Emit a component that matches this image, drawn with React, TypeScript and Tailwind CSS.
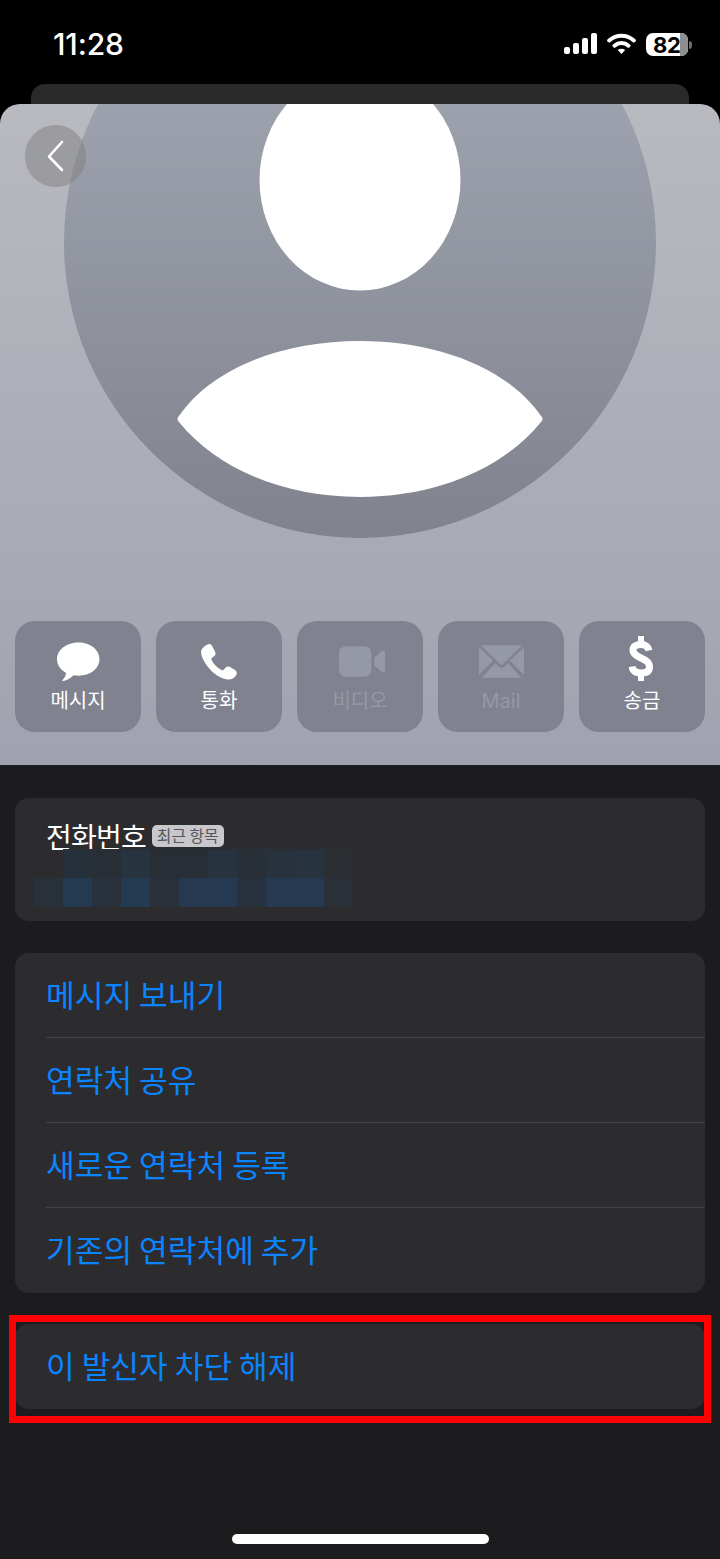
const KR = "font-['Noto_Sans_CJK_KR','Noto_Sans',sans-serif]";

const topCells = [
  "", "bg-[#26303a]", "bg-[#282e35]", "bg-[#27333f]", "bg-[#282e36]", "bg-[#282e36]", "bg-[#27333f]", "bg-[#282f37]", "bg-[#27323d]", "bg-[#27333f]", "bg-[#2b2e33]",
];
const bottomCells = [
  "bg-[#28313a]", "bg-[#243a50]", "bg-[#28313c]", "bg-[#243a50]", "bg-[#29303a]", "bg-[#253a51]", "bg-[#253a51]", "bg-[#27323e]", "bg-[#253a50]", "bg-[#253a50]", "bg-[#2a2f38]",
];

function ActionButton({ label, icon, dim }: { label: string; icon: React.ReactNode; dim?: boolean }) {
  return (
    <div className="w-[126px] h-[111px] rounded-[20px] bg-[#80828f] flex flex-col items-center">
      <div className="h-[64px] w-full flex items-center justify-center pt-[18px]">{icon}</div>
      <span className={`font-['Inter','Noto_Sans_CJK_KR',sans-serif] text-[20px] leading-[28px] mt-[2px] ${dim ? "text-[#9598a5]" : "text-white"}`}>{label}</span>
    </div>
  );
}

function ListRow({ label, last }: { label: string; last?: boolean }) {
  return (
    <div className={`h-[85px] ml-[31px] pb-[3px] flex items-center ${last ? "" : "border-b border-[#424245]"}`}>
      <span className={`${KR} text-[31.200px] text-[#0a84ff] leading-none`}>{label}</span>
    </div>
  );
}

export default function App() {
  return (
    <div className="relative w-[720px] h-[1559px] bg-black overflow-hidden flex flex-col">
      {/* status bar */}
      <div className="h-[84px] shrink-0 flex items-start justify-between pt-[25px] pl-[53px] pr-[28px]">
        <span className="font-['Inter',sans-serif] text-[30px] font-medium leading-[38px] text-white tracking-[-0.1px]">11:28</span>
        <div className="flex items-start gap-[10px] pt-[8px]">
          <svg width="33" height="21" viewBox="0 0 33 21" fill="white">
            <rect x="0" y="14" width="6" height="7" rx="2" />
            <rect x="9" y="10" width="6" height="11" rx="2" />
            <rect x="18" y="5" width="6" height="16" rx="2" />
            <rect x="27" y="0" width="6" height="21" rx="2" />
          </svg>
          <svg width="29" height="22" viewBox="0 0 29 22" fill="none" stroke="white" strokeWidth="4" strokeLinecap="round">
            <path d="M2.200 7.500C9.500 1.300 19.500 1.300 26.800 7.500" />
            <path d="M7.500 12.700C11.500 9.200 17.500 9.200 21.500 12.700" />
            <path d="M14.500 21L10.800 17C13 15.200 16 15.200 18.200 17Z" fill="white" strokeWidth="0" />
          </svg>
          <div className="relative w-[42px] h-[23px] rounded-[7px] bg-white flex items-center justify-start pl-[7px]">
            <div className="absolute right-0 top-0 bottom-0 w-[8px] rounded-r-[7px] bg-[#8e8e8e]" />
            <span className="relative font-['Inter',sans-serif] text-[22px] font-bold text-black leading-none tracking-[-0.3px]">82</span>
          </div>
          <div className="w-[3px] h-[8px] mt-[8px] rounded-r-full bg-[#6e6e6e] -ml-[9px]" />
        </div>
      </div>

      {/* sheet behind */}
      <div className="h-[20px] shrink-0 mx-[31px] rounded-t-[14px] bg-[#2a2a2a]" />

      {/* contact header */}
      <div className="relative h-[661px] shrink-0 rounded-t-[20px] overflow-hidden bg-gradient-to-b from-[#b9bac0] to-[#a0a2af] flex flex-col justify-end">
        <svg width="720" height="661" viewBox="0 0 720 661" className="absolute left-0 top-0">
          <defs>
            <linearGradient id="avatar" x1="0" y1="0" x2="0" y2="1">
              <stop offset="0" stopColor="#a7acb8" />
              <stop offset="1" stopColor="#80838e" />
            </linearGradient>
          </defs>
          <circle cx="360" cy="138" r="296" fill="url(#avatar)" />
          <ellipse cx="360" cy="76" rx="100.500" ry="110.500" fill="white" />
          <path d="M179 312C213 263 284 237 360 237C436 237 507 263 541 312C543 314 543 316 541 318C503 365 436 393 360 393C284 393 217 365 179 318C177 316 177 314 179 312Z" fill="white" />
        </svg>

        <div className="absolute left-[25px] top-[21px] w-[61px] h-[62px] rounded-full bg-[#7f7f7f]/50 flex items-center justify-center">
          <svg width="20" height="32" viewBox="0 0 20 32" fill="none" stroke="white" strokeWidth="2.6" strokeLinecap="round" strokeLinejoin="round">
            <path d="M16 2L3 16.500L16 30" />
          </svg>
        </div>

        <div className="relative flex justify-between px-[15px] pb-[33px]">
          <ActionButton
            label="메시지"
            icon={
              <svg width="43" height="40" viewBox="0 0 44 40" fill="white">
                <path d="M22 0C34 0 43.500 7.500 43.500 17C43.500 27 34 34 22 34C20 34 18.500 33.800 17 33.500C14 36 10 39 6.500 39.500C5.500 39.600 5.200 38.800 5.800 38.200C7.500 36.500 9 34 9.300 31.200C3.500 28 0 23 0 17C0 7.500 10 0 22 0Z" />
              </svg>
            }
          />
          <ActionButton
            label="통화"
            icon={
              <svg width="36" height="36" viewBox="0 0 36 36" fill="white">
                <path d="M6 .8C8 -.4 10 0 11 1.800L14 7.500C15 9.500 14.500 11 13 12.200L11 13.800C10.200 14.500 10.200 15.400 10.800 16.500C13 20.500 16.500 24 20.500 26C21.500 26.500 22.400 26.400 23 25.500L24.500 23.800C25.800 22.300 27.400 22 29 23L34 26C36 27.300 36.300 29.500 35 31.500C33 34.500 30 36 26.500 35.500C19 34.500 12 29.500 7 23C2.500 17 -.5 11 .2 7C.7 4.500 3 2.300 6 .8Z" />
              </svg>
            }
          />
          <ActionButton
            dim
            label="비디오"
            icon={
              <svg width="46" height="31" viewBox="0 0 47 31" fill="#9598a5" className="-mt-[2px] ml-[3px]">
                <rect x="0" y="0" width="33" height="31" rx="7" />
                <path d="M36 11.500L43.500 5C45 3.800 47 4.500 47 6.500V24.500C47 26.500 45 27.200 43.500 26L36 19.500Z" />
              </svg>
            }
          />
          <ActionButton
            dim
            label="Mail"
            icon={
              <svg width="45" height="33" viewBox="0 0 46 33" fill="#9598a5" className="-mt-[2px]">
                <path d="M2 0H44L24.500 19C23.500 20 22.500 20 21.500 19Z" />
                <path d="M0 2V30L14.500 15.500Z" />
                <path d="M46 2V30L31.500 15.500Z" />
                <path d="M3 33H43L29.500 18L26 21.500C24 23.300 22 23.300 20 21.500L16.500 18Z" />
              </svg>
            }
          />
          <ActionButton
            label="송금"
            icon={
              <svg width="24" height="45" viewBox="0 0 24 45" fill="none" stroke="white" className="-mt-[8px] -ml-[2px]">
                <path d="M20 14.500C19 10.500 16.500 8.500 12 8.500C7 8.500 4 10.500 4 14C4 17.500 7 19.500 12 22C17.500 24.500 20.500 26.500 20.500 31C20.500 35 17.500 37 12 37C6.500 37 3.500 34.500 3 30.500" strokeWidth="7" />
                <path d="M12 0V8M12 37V45" strokeWidth="6" />
              </svg>
            }
          />
        </div>
      </div>

      {/* details */}
      <div className="flex-1 bg-[#1c1c1e] px-[15px] pt-[33px] flex flex-col">
        <div className="h-[123px] rounded-[14px] bg-[#2c2c2e] flex flex-col">
          <div className="flex items-center h-[51px] pl-[31px] pt-[25px]">
            <span className={`${KR} text-[28px] leading-none text-white tracking-[-0.8px]`}>전화번호</span>
            <span className={`${KR} ml-[6px] h-[22px] px-[5px] rounded-[5px] bg-[#c7c7cc] text-[#55555a] text-[15.800px] leading-[21px] whitespace-nowrap`}>최근 항목</span>
          </div>
          <div className="ml-[19px] flex flex-col">
            <div className="flex h-[29px]">
              {topCells.map((c, i) => (
                <div key={i} className={`w-[29px] ${c}`} />
              ))}
            </div>
            <div className="flex h-[29px]">
              {bottomCells.map((c, i) => (
                <div key={i} className={`w-[29px] ${c}`} />
              ))}
            </div>
          </div>
        </div>

        <div className="mt-[32px] rounded-[14px] bg-[#2c2c2e] flex flex-col">
          <ListRow label="메시지 보내기" />
          <ListRow label="연락처 공유" />
          <ListRow label="새로운 연락처 등록" />
          <ListRow label="기존의 연락처에 추가" last />
        </div>

        <div className="mt-[31px] rounded-[14px] bg-[#2c2c2e]">
          <ListRow label="이 발신자 차단 해제" last />
        </div>
      </div>

      {/* highlight around the unblock row */}
      <div className="absolute left-[9px] top-[1315px] w-[702px] h-[108px] border-[7px] border-[#ff0000]" />

      {/* home indicator */}
      <div className="absolute left-[232px] top-[1534px] w-[257px] h-[10px] rounded-full bg-white" />
    </div>
  );
}
